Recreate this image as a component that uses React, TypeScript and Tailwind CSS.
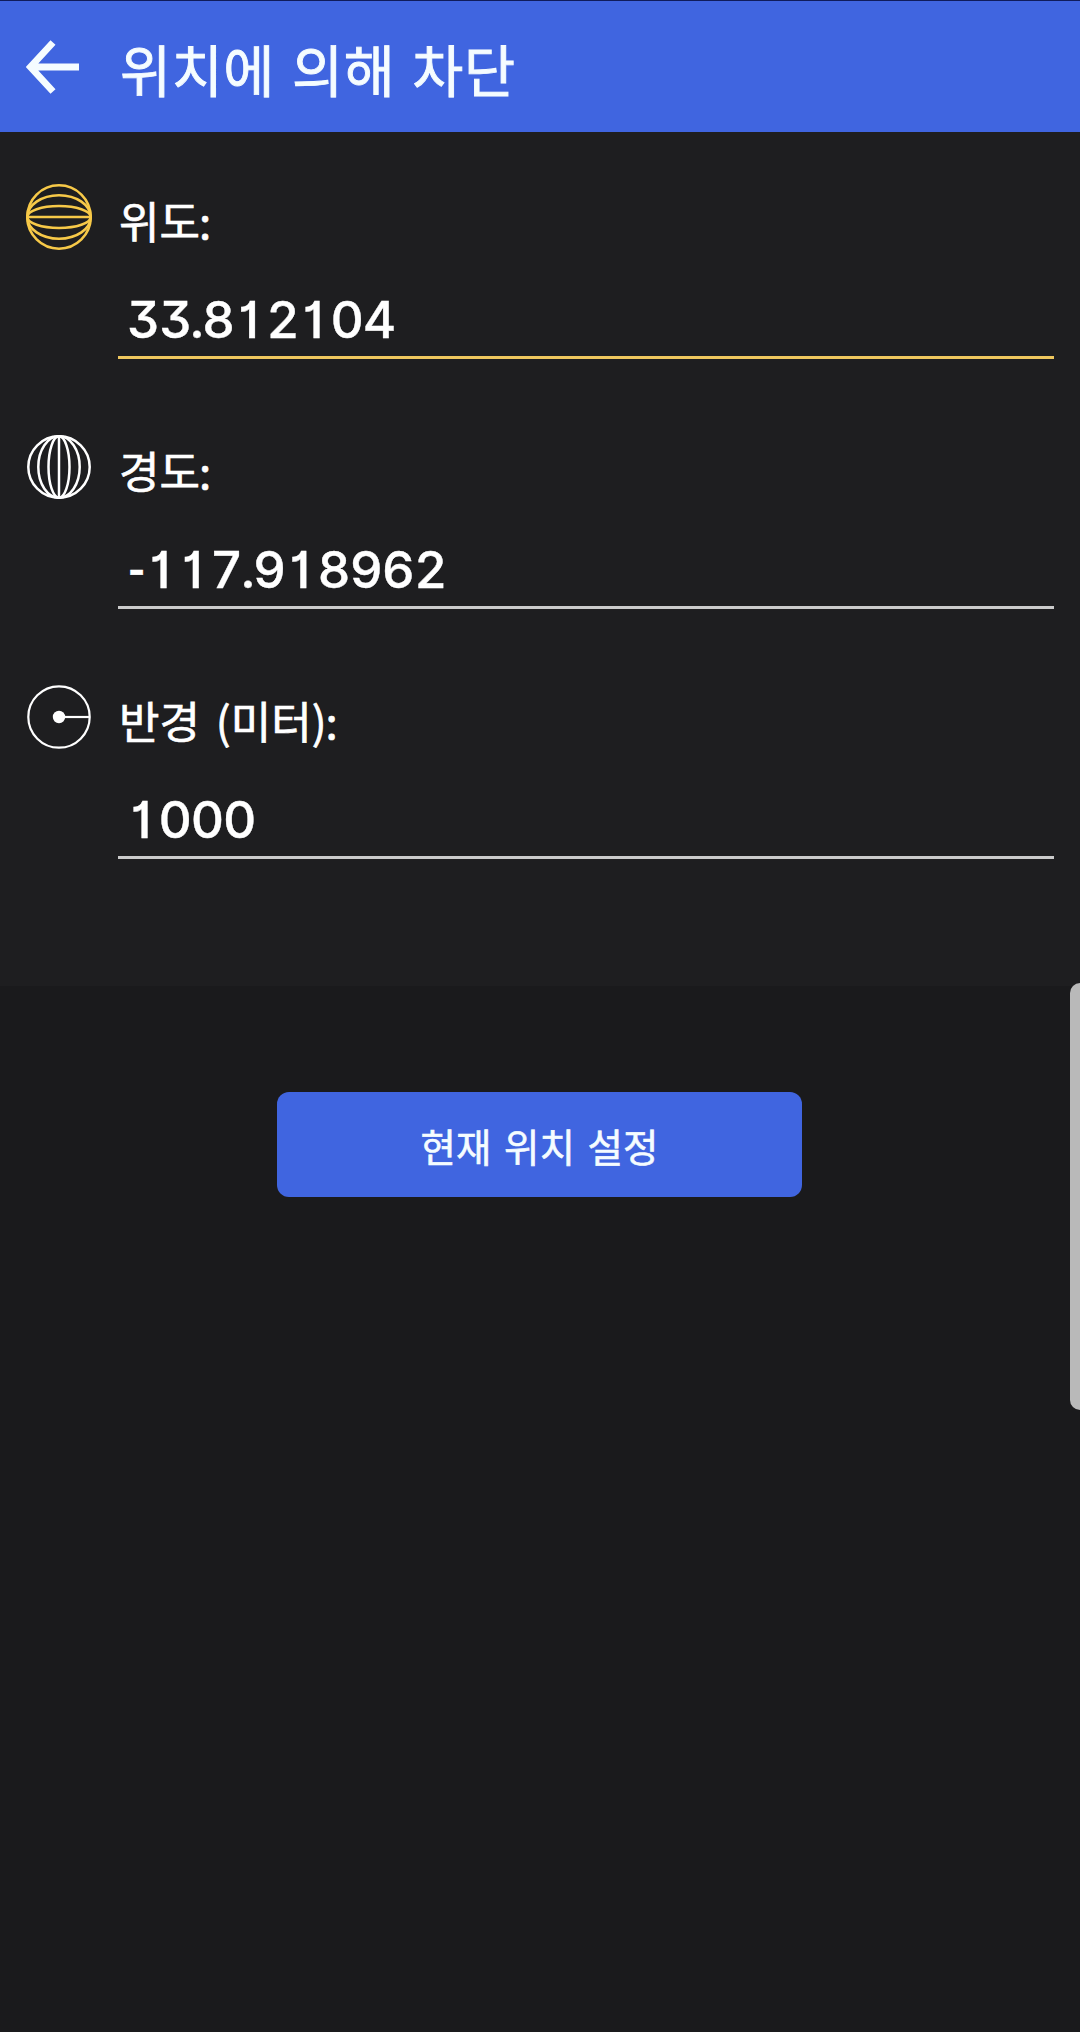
import type React from "react"

const LatitudeIcon: React.FC = () => (
  <svg width="68" height="68" viewBox="0 0 68 68" fill="none" stroke="#f7c948" strokeWidth="2.6">
    <circle cx="34" cy="34" r="31.7" />
    <ellipse cx="34" cy="34" rx="31.7" ry="21.8" />
    <ellipse cx="34" cy="34" rx="31.7" ry="11" />
    <path d="M2 34h64" />
  </svg>
)

const LongitudeIcon: React.FC = () => (
  <svg width="68" height="68" viewBox="0 0 68 68" fill="none" stroke="#fff" strokeWidth="2.5">
    <circle cx="34" cy="34" r="30.7" />
    <ellipse cx="34" cy="34" rx="20.7" ry="30.7" />
    <ellipse cx="34" cy="34" rx="10.5" ry="30.7" />
    <path d="M34 3v62" />
  </svg>
)

const RadiusIcon: React.FC = () => (
  <svg width="68" height="68" viewBox="0 0 68 68" fill="none" stroke="#fff" strokeWidth="2.2">
    <circle cx="34" cy="34" r="30.7" />
    <circle cx="34" cy="34" r="6.2" fill="#fff" stroke="none" />
    <path d="M34 34h30" />
  </svg>
)

const FIELDS = [
  { label: "위도", value: "33.812104", icon: <LatitudeIcon />, active: true },
  { label: "경도", value: "-117.918962", icon: <LongitudeIcon />, active: false },
  { label: "반경 (미터)", value: "1000", icon: <RadiusIcon />, active: false },
]

function charWidth(char: string) {
  if (char === ".") return "w-[11px]"
  if (char === "-") return "w-[19px] scale-x-75"
  if (char === "1") return "w-[32.2px] pr-[4px]"
  return "w-[32.2px]"
}

export default function App() {
  return (
    <div className="relative flex h-[2032px] w-[1080px] flex-col overflow-hidden bg-[#1a1a1c] font-['Inter','Noto_Sans_CJK_KR',sans-serif] text-white">
      <header className="flex h-[132px] items-center border-t border-[#101c5c] bg-[#4065e0] pl-[26px] text-[#f5fcff]">
        <svg width="53" height="54" viewBox="0 0 53 54" fill="none" stroke="currentColor" strokeWidth="6.8">
          <path d="M27 2.5 4.5 27l22.5 24.5M4 27h49" />
        </svg>
        <h1 className="pt-[3px] pl-[41px] font-['Noto_Sans_CJK_KR',sans-serif] text-[55.5px] leading-[80px] tracking-[0.6px] [word-spacing:4px] [-webkit-text-stroke:0.9px_currentColor]">
          위치에 의해 차단
        </h1>
      </header>

      <main className="h-[854px] bg-[#1e1e20] pt-[51px] pr-[26px] pl-[25px]">
        {FIELDS.map((field) => (
          <div key={field.label} className="flex h-[250px] items-start">
            <div className="w-[93px] shrink-0">{field.icon}</div>
            <label className="flex flex-1 flex-col">
              <span className="h-[76px] pt-[5px] pl-[1px] font-['Noto_Sans_CJK_KR',sans-serif] text-[44px] leading-[64px] [word-spacing:6px] [-webkit-text-stroke:0.7px_currentColor]">
                {field.label}
                <span className="-ml-px">:</span>
              </span>
              <span
                className={`flex h-[100px] border-b-[3px] pt-[29px] pl-[9px] text-[51px] leading-[64px] font-medium [-webkit-text-stroke:0.4px_currentColor] [font-feature-settings:'cv01','cv09'] ${
                  field.active ? "border-[#efc75e]" : "border-[#cbcbcb]"
                }`}
              >
                {field.value.split("").map((char, i) => (
                  <span key={i} className={`flex justify-center ${charWidth(char)}`}>
                    {char}
                  </span>
                ))}
              </span>
            </label>
          </div>
        ))}
      </main>

      <button className="mt-[106px] ml-[277px] flex h-[105px] w-[525px] items-center justify-center rounded-[12px] bg-[#4065e0] pt-[3px] font-['Noto_Sans_CJK_KR',sans-serif] text-[38.5px] text-[#f5fcff] [word-spacing:4px] [-webkit-text-stroke:0.6px_currentColor]">
        현재 위치 설정
      </button>

      <div className="absolute top-[983px] right-0 h-[427px] w-[10px] rounded-l-[10px] bg-[#b9b9b9]" />
    </div>
  )
}
